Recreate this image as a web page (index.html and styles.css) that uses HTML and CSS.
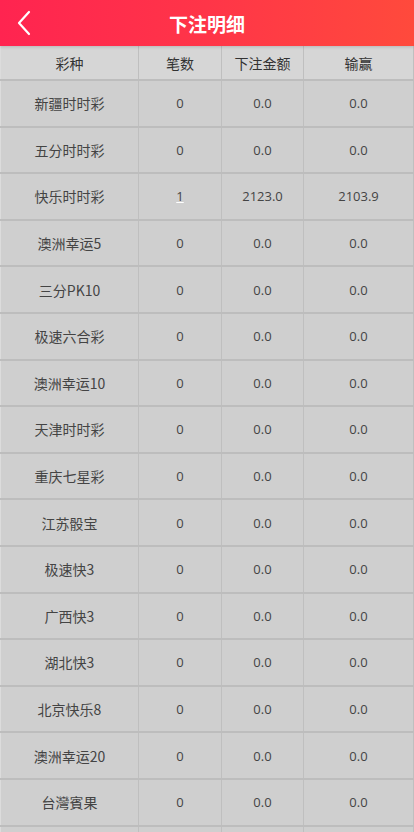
FILE: index.html
```html
<!DOCTYPE html>
<html lang="zh-CN">
<head>
  <meta charset="UTF-8">
  <meta name="viewport" content="width=device-width, initial-scale=1.0">
  <title>下注明细</title>
  <link rel="stylesheet" href="styles.css">
</head>
<body>
  <header class="topbar">
    <a class="back" href="#">
      <svg width="16" height="26" viewBox="0 0 16 26" fill="none" stroke="white" stroke-width="2.2" stroke-linecap="round" stroke-linejoin="round">
        <polyline points="13,2 3,13 13,24"></polyline>
      </svg>
    </a>
    <h1>下注明细</h1>
  </header>

  <table class="detail">
    <colgroup>
      <col class="c-name">
      <col class="c-count">
      <col class="c-amount">
      <col class="c-win">
    </colgroup>
    <thead>
      <tr>
        <th>彩种</th>
        <th>笔数</th>
        <th>下注金额</th>
        <th>输赢</th>
      </tr>
    </thead>
    <tbody>
      <tr><td>新疆时时彩</td><td>0</td><td>0.0</td><td>0.0</td></tr>
      <tr><td>五分时时彩</td><td>0</td><td>0.0</td><td>0.0</td></tr>
      <tr><td>快乐时时彩</td><td><a class="count-link" href="#">1</a></td><td>2123.0</td><td>2103.9</td></tr>
      <tr><td>澳洲幸运5</td><td>0</td><td>0.0</td><td>0.0</td></tr>
      <tr><td>三分PK10</td><td>0</td><td>0.0</td><td>0.0</td></tr>
      <tr><td>极速六合彩</td><td>0</td><td>0.0</td><td>0.0</td></tr>
      <tr><td>澳洲幸运10</td><td>0</td><td>0.0</td><td>0.0</td></tr>
      <tr><td>天津时时彩</td><td>0</td><td>0.0</td><td>0.0</td></tr>
      <tr><td>重庆七星彩</td><td>0</td><td>0.0</td><td>0.0</td></tr>
      <tr><td>江苏骰宝</td><td>0</td><td>0.0</td><td>0.0</td></tr>
      <tr><td>极速快3</td><td>0</td><td>0.0</td><td>0.0</td></tr>
      <tr><td>广西快3</td><td>0</td><td>0.0</td><td>0.0</td></tr>
      <tr><td>湖北快3</td><td>0</td><td>0.0</td><td>0.0</td></tr>
      <tr><td>北京快乐8</td><td>0</td><td>0.0</td><td>0.0</td></tr>
      <tr><td>澳洲幸运20</td><td>0</td><td>0.0</td><td>0.0</td></tr>
      <tr><td>台灣賓果</td><td>0</td><td>0.0</td><td>0.0</td></tr>
      <tr><td>北京PK10</td><td>0</td><td>0.0</td><td>0.0</td></tr>
    </tbody>
  </table>
</body>
</html>
```

FILE: styles.css
```css
body {
  margin: 0;
  padding: 0;
  background-color: #d0d0d0;
  font-family: "Open Sans", "Noto Sans CJK SC", sans-serif;
  color: #444;
}
.topbar {
  height: 46px;
  display: flex;
  align-items: center;
  justify-content: center;
  position: relative;
  background: linear-gradient(90deg, #ff2450 0%, #ff3548 50%, #ff4a3c 100%);
  box-shadow: 0 1px 3px rgba(0,0,0,0.15);
  z-index: 1;
}
.topbar h1 {
  margin: 0;
  font-size: 19px;
  font-weight: bold;
  color: white;
  font-family: "Noto Sans CJK SC", sans-serif;
}
.back {
  position: absolute;
  left: 16px;
  top: 10px;
  display: flex;
}
.detail {
  width: 100%;
  border-collapse: collapse;
  table-layout: fixed;
  border-left: 1px solid #dcdcdc;
}
.c-name { width: 138px; }
.c-count { width: 83px; }
.c-amount { width: 82px; }
.detail th,
.detail td {
  text-align: center;
  font-size: 13px;
  font-weight: normal;
  border-right: 1px solid #bfbfbf;
  border-bottom: 2px solid #bdbdbd;
  padding: 0;
}
.detail th {
  height: 33px;
  font-size: 14px;
  background-color: #d6d6d6;
  color: #333;
  font-family: "Noto Sans CJK SC", sans-serif;
}
.detail td {
  height: 44.6px;
  background-color: #cfcfcf;
}
.detail td:first-child {
  font-size: 14px;
  font-family: "Noto Sans CJK SC", sans-serif;
}
.count-link {
  color: #444;
  text-decoration: underline;
  text-decoration-color: white;
}
```
